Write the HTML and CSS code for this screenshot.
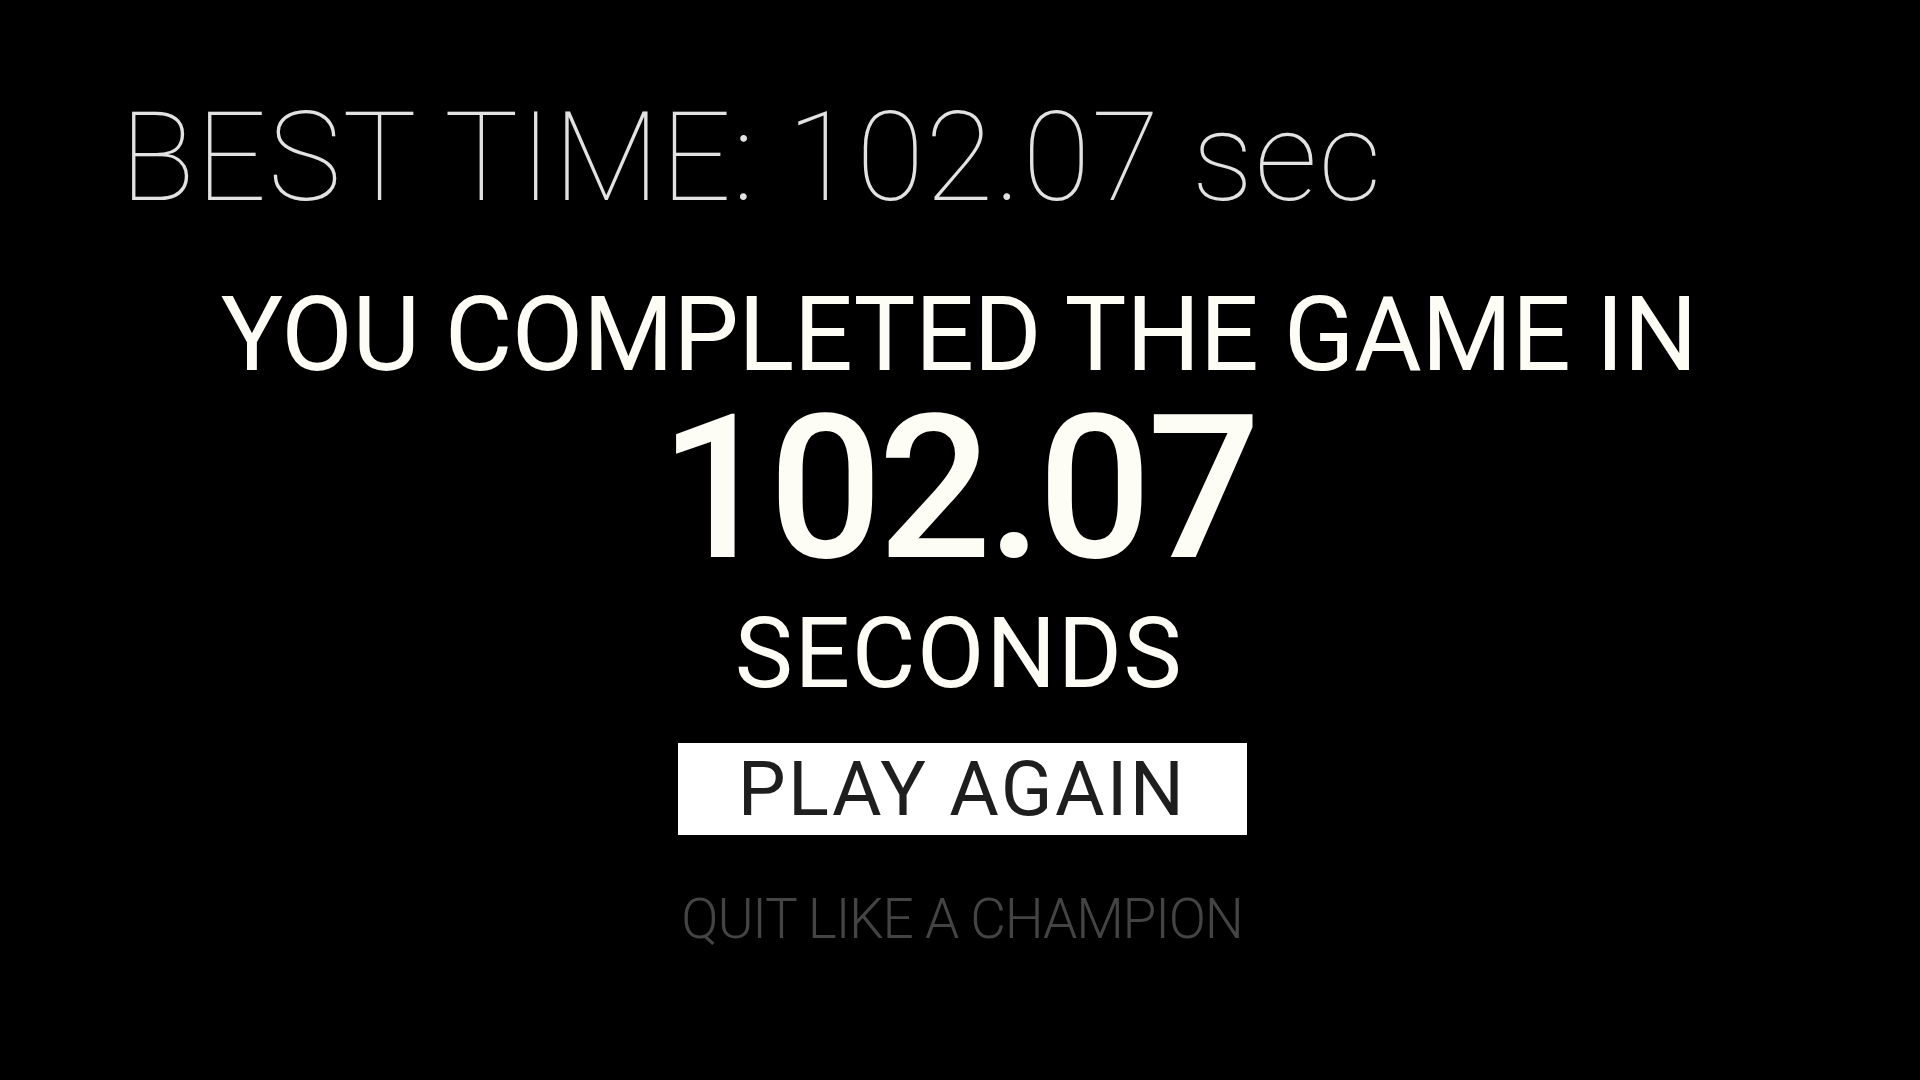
FILE: index.html
```html
<!DOCTYPE html>
<html>
<head>
<meta charset="utf-8">
<link rel="stylesheet" href="styles.css">
</head>
<body>
<div class="screen">
  <div class="best">BEST TIME: 102.07 sec</div>
  <div class="result">
    <div class="completed">YOU COMPLETED THE GAME IN</div>
    <div class="time">102.07</div>
    <div class="unit">SECONDS</div>
    <div class="play">PLAY AGAIN</div>
    <div class="quit">QUIT LIKE A CHAMPION</div>
  </div>
</div>
</body>
</html>
```
FILE: styles.css
```css
html, body {
  margin: 0;
  padding: 0;
  background: #000;
}
.screen {
  width: 1920px;
  height: 1080px;
  background: #000;
  font-family: Roboto, "Noto Sans", sans-serif;
  display: flex;
  flex-direction: column;
  overflow: hidden;
}
.best {
  padding: 96px 0 0 120px;
  font-size: 124px;
  line-height: 1;
  font-weight: 100;
  color: #e2e2e2;
  letter-spacing: 1.3px;
}
.result {
  display: flex;
  flex-direction: column;
  align-items: center;
  padding-left: 4px;
}
.completed {
  margin-top: 63px;
  margin-right: 6px;
  font-size: 104px;
  line-height: 1;
  font-weight: 400;
  color: #fdfdf6;
  letter-spacing: -0.5px;
}
.time {
  margin-top: 2px;
  margin-right: 8px;
  font-size: 200px;
  line-height: 1;
  font-weight: 500;
  color: #fdfdf6;
  letter-spacing: -4.5px;
}
.unit {
  margin-top: 16px;
  margin-right: 6px;
  font-size: 98px;
  line-height: 1;
  font-weight: 400;
  color: #fdfdf6;
  letter-spacing: 1.6px;
}
.play {
  margin-top: 40px;
  width: 569px;
  box-sizing: border-box;
  padding: 8px 0;
  background: #fff;
  color: #1e1e1e;
  text-align: center;
  font-size: 76px;
  line-height: 1;
  font-weight: 400;
  letter-spacing: 2.3px;
}
.quit {
  margin-top: 57px;
  font-size: 55px;
  line-height: 1;
  font-weight: 300;
  color: #444;
  letter-spacing: -1.2px;
}
```
